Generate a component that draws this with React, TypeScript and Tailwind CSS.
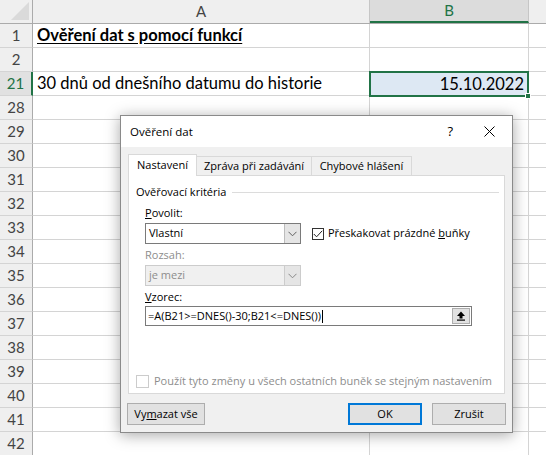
import * as React from 'react';

const rows = ['1', '2', '21', '28', '29', '30', '31', '32', '33', '34', '35', '36', '37', '38', '39', '40', '41', '42'];

const sheetFont = { fontFamily: 'Lato, "Liberation Sans", sans-serif' };
const uiFont = { fontFamily: '"Segoe UI", "Open Sans", "Noto Sans", sans-serif' };

const Chevron: React.FC<{ color?: string }> = ({ color = '#606060' }) => (
  <svg width="9" height="6" viewBox="0 0 9 6">
    <path d="M0.5 0.8 L4.5 4.8 L8.5 0.8" fill="none" stroke={color} strokeWidth="1" />
  </svg>
);

const SheetRow: React.FC<{ label: string }> = ({ label }) => {
  const active = label === '21';
  return (
    <div className="flex h-[24px]">
      <div
        className={`w-[33px] shrink-0 flex items-center justify-center border-b border-[#d4d4d4] text-[15px] ${
          active ? 'bg-[#e1e1e1] text-[#217346] border-r-2 border-r-[#217346]' : 'bg-[#efefef] text-[#444] border-r border-r-[#ababab]'
        }`}
      >
        {label}
      </div>
      <div className="w-[337px] shrink-0 border-r border-b border-[#d4d4d4] flex items-center pl-[4px] text-[16.5px] text-black whitespace-nowrap">
        {label === '1' && <span className="font-bold underline underline-offset-2">Ověření dat s pomocí funkcí</span>}
        {label === '21' && <span>30 dnů od dnešního datumu do historie</span>}
      </div>
      {active ? (
        <div className="relative w-[160px] shrink-0 -ml-[1px] -mt-[1px] h-[26px] border-2 border-[#217346] bg-[#dde8f3] flex items-center justify-end pr-[3px] text-[16.5px] text-black z-10">
          15.10.2022
          <span className="absolute -right-[4px] -bottom-[4px] w-[6px] h-[6px] bg-[#217346] border border-white" />
        </div>
      ) : (
        <div className="w-[159px] shrink-0 border-r border-b border-[#d4d4d4]" />
      )}
      <div className="flex-1 border-b border-[#d4d4d4]" />
    </div>
  );
};

const Sheet: React.FC = () => (
  <div className="w-[546px] h-[455px] overflow-hidden bg-white" style={sheetFont}>
    <div className="flex h-[24px] bg-[#efefef] border-b border-[#ababab]">
      <div className="w-[33px] shrink-0 border-r border-[#ababab] relative overflow-hidden">
        <svg className="absolute right-[3px] bottom-[3px]" width="18" height="18" viewBox="0 0 18 18">
          <path d="M18 0 L18 18 L0 18 Z" fill="#dadada" />
        </svg>
      </div>
      <div className="w-[337px] shrink-0 border-r border-[#c6c6c6] flex items-center justify-center text-[15px] text-[#444]">A</div>
      <div className="w-[159px] shrink-0 border-r border-[#c6c6c6] bg-[#dcdcdc] border-b-2 border-b-[#217346] flex items-center justify-center text-[15px] text-[#217346]">B</div>
      <div className="flex-1" />
    </div>
    {rows.map((r) => (
      <SheetRow key={r} label={r} />
    ))}
  </div>
);

const Dialog: React.FC = () => (
  <div
    className="absolute left-[120px] top-[115px] w-[393px] h-[318px] bg-[#f0f0f0] border border-[#8a8a8a] shadow-[0_2px_14px_rgba(0,0,0,0.35)] text-[11px] text-black flex flex-col whitespace-nowrap"
    style={uiFont}
  >
    {/* title bar */}
    <div className="h-[31px] bg-white flex items-center pl-[9px] shrink-0">
      <span className="text-[11.5px]">Ověření dat</span>
      <span className="ml-auto mr-[31px] text-[13px]">?</span>
      <svg className="mr-[17px]" width="11" height="11" viewBox="0 0 11 11">
        <path d="M0.5 0.5 L10.5 10.5 M10.5 0.5 L0.5 10.5" stroke="#000" strokeWidth="1" />
      </svg>
    </div>

    {/* tabs */}
    <div className="flex items-end h-[28px] pl-[7px] shrink-0">
      <div className="h-[22px] flex items-center justify-center bg-white border border-b-0 border-[#d9d9d9] relative z-10 -mb-px w-[69px]">Nastavení</div>
      <div className="h-[19px] flex items-center justify-center border border-l-0 border-b-0 border-[#d9d9d9] bg-[#f0f0f0] w-[115px]">Zpráva při zadávání</div>
      <div className="h-[19px] flex items-center justify-center border border-l-0 border-b-0 border-[#d9d9d9] bg-[#f0f0f0] w-[100px]">Chybové hlášení</div>
    </div>

    {/* panel */}
    <div className="mx-[7px] h-[219px] bg-white border border-[#d9d9d9] flex flex-col px-[7px] shrink-0">
      <div className="flex items-center mt-[8px] h-[16px]">
        <span>Ověřovací kritéria</span>
        <div className="flex-1 ml-[6px] h-px bg-[#dcdcdc] mr-[-2px]" />
      </div>

      <div className="ml-[9px] mt-[5px] h-[16px] flex items-center">
        <span><span className="underline">P</span>ovolit:</span>
      </div>
      <div className="ml-[9px] mt-[2px] flex items-center">
        <div className="w-[156px] h-[21px] border border-[#7a7a7a] bg-white flex items-center">
          <span className="pl-[3px] flex-1">Vlastní</span>
          <div className="w-[16px] h-full bg-[#e5e5e5] border-l border-[#bcbcbc] flex items-center justify-center">
            <Chevron />
          </div>
        </div>
        <div className="ml-[11px] w-[12px] h-[12px] border border-[#333] bg-white flex items-center justify-center">
          <svg width="10" height="8" viewBox="0 0 10 8">
            <path d="M0.8 4 L3.6 6.8 L9.2 0.8" fill="none" stroke="#222" strokeWidth="1" />
          </svg>
        </div>
        <span className="ml-[4px]">Přeskakovat prázdné <span className="underline">b</span>uňky</span>
      </div>

      <div className="ml-[9px] mt-[3px] h-[16px] flex items-center text-[#8d8d8d]">Rozsah:</div>
      <div className="ml-[9px] mt-[2px] w-[156px] h-[21px] border border-[#cccccc] bg-[#f0f0f0] flex items-center text-[#8d8d8d]">
        <span className="pl-[3px] flex-1">je mezi</span>
        <div className="w-[16px] h-full bg-[#e5e5e5] border-l border-[#cccccc] flex items-center justify-center">
          <Chevron color="#888" />
        </div>
      </div>

      <div className="ml-[9px] mt-[3px] h-[16px] flex items-center">
        <span><span className="underline">V</span>zorec:</span>
      </div>
      <div className="ml-[9px] mt-[1px] w-[327px] h-[20px] border border-[#7a7a7a] bg-white flex items-center">
        <span className="pl-[2px] flex-1 flex items-center">
          =A(B21&gt;=DNES()-30;B21&lt;=DNES())
          <span className="w-px h-[13px] bg-black ml-px" />
        </span>
        <div className="w-[18px] h-[16px] mr-[1px] bg-[#e1e1e1] border border-[#adadad] flex items-center justify-center">
          <svg width="10" height="10" viewBox="0 0 10 10">
            <path d="M5 0.5 L9 5 L6.5 5 L6.5 7.5 L3.5 7.5 L3.5 5 L1 5 Z" fill="#000" />
            <rect x="1" y="8.5" width="8" height="1.2" fill="#000" />
          </svg>
        </div>
      </div>

      <div className="mt-[47px] flex items-center">
        <div className="w-[13px] h-[13px] border border-[#cccccc] bg-white" />
        <span className="ml-[5px] text-[#8d8d8d]">Použít tyto změny u všech ostatních buněk se stejným nastavením</span>
      </div>
    </div>

    {/* buttons */}
    <div className="flex items-center px-[6px] mt-[9px]">
      <div className="w-[78px] h-[22px] border border-[#adadad] bg-[#e1e1e1] flex items-center justify-center">
        <span>Vy<span className="underline">m</span>azat vše</span>
      </div>
      <div className="ml-auto w-[74px] h-[22px] border-2 border-[#0078d7] bg-[#e1e1e1] flex items-center justify-center">OK</div>
      <div className="ml-[10px] w-[74px] h-[22px] border border-[#adadad] bg-[#e1e1e1] flex items-center justify-center">Zrušit</div>
    </div>
  </div>
);

export default function App() {
  return (
    <div className="relative w-[546px] h-[455px] overflow-hidden">
      <Sheet />
      <Dialog />
    </div>
  );
}
